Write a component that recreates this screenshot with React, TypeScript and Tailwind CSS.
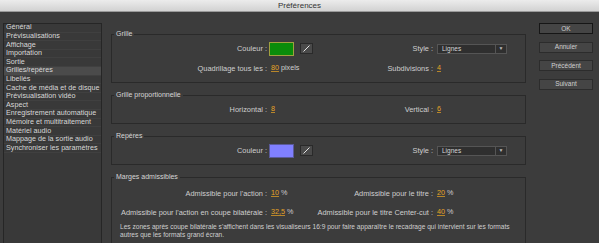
const categories = [
  "Général",
  "Prévisualisations",
  "Affichage",
  "Importation",
  "Sortie",
  "Grilles/repères",
  "Libellés",
  "Cache de média et de disque",
  "Prévisualisation vidéo",
  "Aspect",
  "Enregistrement automatique",
  "Mémoire et multitraitement",
  "Matériel audio",
  "Mappage de la sortie audio",
  "Synchroniser les paramètres",
];

const Group = ({ title, children, last }: { title: string; children: React.ReactNode; last?: boolean }) => (
  <fieldset
    className={`border border-[#2a2a2a] px-0 pt-[3px] ${last ? "pb-[40px]" : "pb-[6px]"} mt-[8px] first:mt-[7px]`}
  >
    <legend className="ml-[2px] px-[2px] text-[7px] leading-[8px] text-[#d6d6d6]">{title}</legend>
    {children}
  </fieldset>
);

const Row = ({ children }: { children: React.ReactNode }) => (
  <div className="grid grid-cols-[155px_46px_120px_1fr] items-center h-[15px]">{children}</div>
);

const Label = ({ children }: { children: React.ReactNode }) => (
  <div className="flex justify-end whitespace-nowrap text-[7.4px] text-[#cfcfcf]">{children}</div>
);

const Value = ({ v, unit }: { v: string; unit?: string }) => (
  <div className="flex items-center whitespace-nowrap text-[7.2px] pl-[4px]">
    <span className="text-[#e6a526] underline decoration-[#b8862a] underline-offset-1">{v}</span>
    {unit && <span className="text-[#cfcfcf] ml-[2px]">{unit}</span>}
  </div>
);

const Swatch = ({ color, border }: { color: string; border: string }) => (
  <div className="flex items-center pl-[2px] gap-[6px]">
    <div className={`w-[25px] h-[14px] border ${color} ${border}`}></div>
    <div className="w-[13px] h-[11px] bg-[#4a4a4a] border border-[#2a2a2a] flex items-center justify-center">
      <svg width="9" height="9" viewBox="0 0 9 9">
        <line x1="1.5" y1="7.5" x2="7.5" y2="1.5" stroke="#e4e4e4" strokeWidth="1" />
      </svg>
    </div>
  </div>
);

const Dropdown = () => (
  <div className="pl-[4px]">
    <div className="w-[70px] h-[10px] bg-[#2f2f2f] border border-[#555555] flex items-center text-[6.5px] text-[#d6d6d6]">
      <span className="flex-1 pl-[4px]">Lignes</span>
      <span className="w-[11px] h-full border-l border-[#555555] flex items-center justify-center text-[5px] text-[#bbbbbb]">
        ▼
      </span>
    </div>
  </div>
);

const Button = ({ label, primary }: { label: string; primary?: boolean }) => (
  <div
    className={`h-[11px] flex items-center justify-center text-[6.5px] text-[#d0d0d0] bg-[#454545] border ${
      primary ? "border-[#161616]" : "border-[#2c2c2c]"
    }`}
  >
    {label}
  </div>
);

const App = () => {
  return (
    <div className="w-[599px] h-[243px] overflow-hidden flex flex-col bg-[#3c3c3c] font-['Liberation_Sans',Arial,sans-serif]">
      <div className="h-[12px] bg-gradient-to-b from-[#ececec] to-[#d2d2d2] border-b border-[#9a9a9a] flex items-center justify-center text-[8px] text-[#333333]">
        Préférences
      </div>

      <div className="flex flex-row flex-1 pt-[11px] min-h-0">
        <div className="ml-[3px] w-[99px] h-[240px] bg-[#393939] border border-[#262626]">
          {categories.map((c) => (
            <div
              key={c}
              className={`h-[8.6px] flex items-center pl-[2px] text-[7.2px] whitespace-nowrap text-[#d8d8d8] border-b border-[#404040] ${
                c === "Grilles/repères" ? "bg-[#4b4b4b]" : ""
              }`}
            >
              {c}
            </div>
          ))}
        </div>

        <div className="ml-[9px] w-[415px] flex flex-col">
          <Group title="Grille">
            <div className="flex flex-col gap-[5px]">
              <Row>
                <Label>Couleur :</Label>
                <Swatch color="bg-[#0a8c0a]" border="border-[#a0a040]" />
                <Label>Style :</Label>
                <Dropdown />
              </Row>
              <Row>
                <Label>Quadrillage tous les :</Label>
                <Value v="80" unit="pixels" />
                <Label>Subdivisions :</Label>
                <Value v="4" />
              </Row>
            </div>
          </Group>

          <Group title="Grille proportionnelle">
            <Row>
              <Label>Horizontal :</Label>
              <Value v="8" />
              <Label>Vertical :</Label>
              <Value v="6" />
            </Row>
          </Group>

          <Group title="Repères">
            <Row>
              <Label>Couleur :</Label>
              <Swatch color="bg-[#8080ff]" border="border-[#5a5a9a]" />
              <Label>Style :</Label>
              <Dropdown />
            </Row>
          </Group>

          <Group title="Marges admissibles" last>
            <div className="flex flex-col gap-[4px] pt-[2px]">
              <Row>
                <Label>Admissible pour l'action :</Label>
                <Value v="10" unit="%" />
                <Label>Admissible pour le titre :</Label>
                <Value v="20" unit="%" />
              </Row>
              <Row>
                <Label>Admissible pour l'action en coupe bilatérale :</Label>
                <Value v="32,5" unit="%" />
                <Label>Admissible pour le titre Center-cut :</Label>
                <Value v="40" unit="%" />
              </Row>
            </div>
            <p className="mt-[3px] pl-[8px] whitespace-nowrap text-[6.6px] leading-[8px] text-[#cfcfcf]">
              Les zones après coupe bilatérale s'affichent dans les visualiseurs 16:9 pour faire apparaître le recadrage
              qui intervient sur les formats
              <br />
              autres que les formats grand écran.
            </p>
          </Group>
        </div>

        <div className="ml-[13px] w-[54px] flex flex-col gap-[7.5px]">
          <Button label="OK" primary />
          <Button label="Annuler" />
          <Button label="Précédent" />
          <Button label="Suivant" />
        </div>
      </div>
    </div>
  );
};

export default App;
